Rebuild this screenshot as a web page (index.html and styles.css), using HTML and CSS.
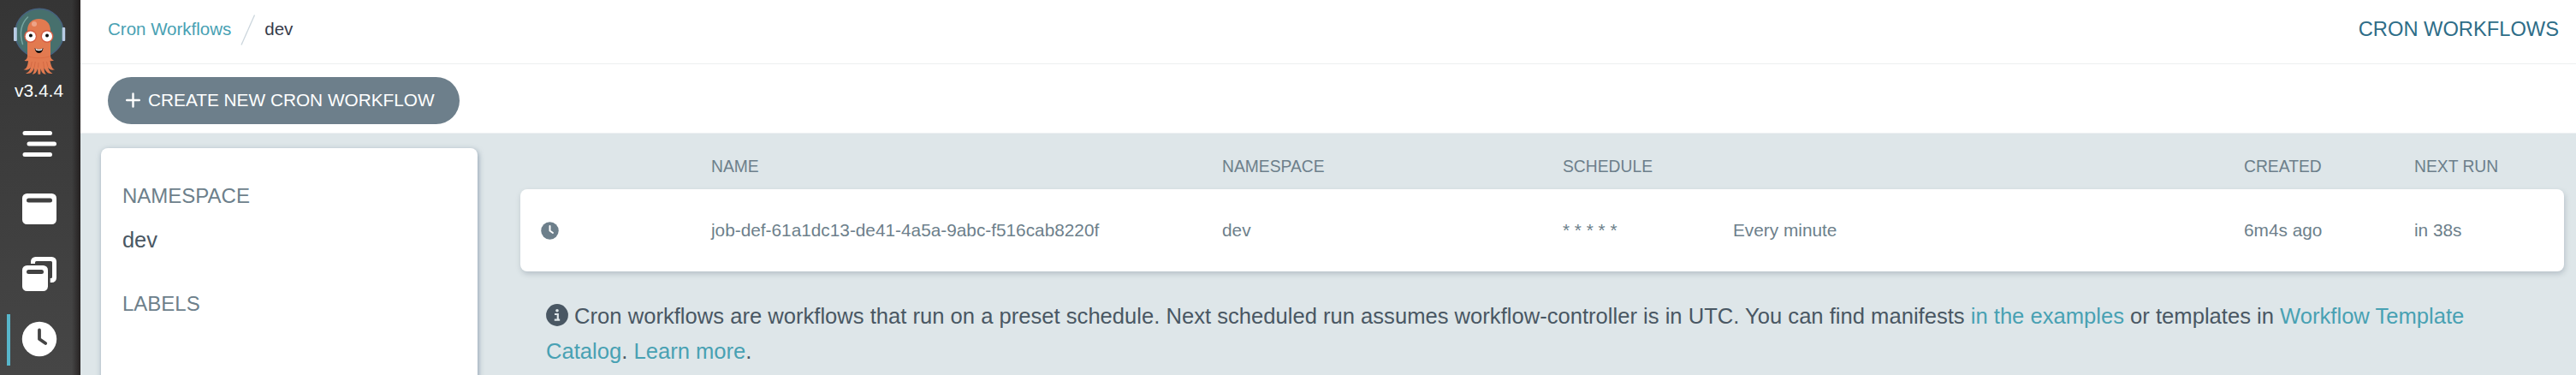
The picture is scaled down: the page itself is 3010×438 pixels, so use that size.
FILE: index.html
```html
<!DOCTYPE html>
<html lang="en">
<head>
<meta charset="utf-8">
<title>Cron Workflows</title>
<link rel="stylesheet" href="styles.css">
</head>
<body>
<div class="app">
  <nav class="sidebar">
    <svg class="logo" viewBox="0 0 62 80" width="62" height="80">
      <circle cx="31" cy="30.500" r="28.300" fill="#47706d" stroke="#476280" stroke-width="1.400"/>
      <path d="M17.500 12C9.500 20 7.500 31 11.500 43.500" fill="none" stroke="#77a5a0" stroke-width="1.500" stroke-linecap="round"/>
      <rect x="1" y="24" width="3.800" height="16" rx="1" fill="#b8cbe4"/>
      <rect x="57.700" y="24" width="3.500" height="16" rx="1" fill="#b8cbe4"/>
      <path d="M17 28C17 19 22.500 14 30.500 14S44 19 44 28V57C44 60 46 62 48 62.500C46 63.500 44.500 63.400 43.500 63C44.500 68.500 46 72.500 49 73.300C45.500 74.500 43 73.500 41 70.500C42 74.500 44 77 46.500 77.700C42 79 38.500 76 36.500 71C36.500 75 37.500 77.500 39 78.500C35 79 33.300 76 32.500 72L32.200 78.800H29.500L29 72C28 76 26 79 22.500 78.500C24.500 77 25 74.500 25 71C23.500 76 20 79 15 77.700C18 76.800 20 74.500 21 70.500C19 73.500 16 74.500 12.500 73.300C16 72.500 17.500 68.500 18 63C16.500 63.600 15 63.500 13.500 62.500C16 61.500 17 60 17 57Z" fill="#e27a50"/>
      <path d="M17 57.500C25 60.500 36 60.500 44 57.500" fill="none" stroke="#d9653f" stroke-width="1" opacity=".6"/>
      <path d="M25 71L26.300 64M36.500 71L35.500 64M21 70L22.300 64M41 70L39.500 64M29.500 71L30 65" stroke="#c95e3b" stroke-width=".6"/>
      <circle cx="25" cy="20" r="3" fill="#eda387"/>
      <circle cx="20.700" cy="34.500" r="7.400" fill="#d65d42"/>
      <circle cx="40" cy="34.500" r="7.400" fill="#d65d42"/>
      <circle cx="20.700" cy="34.500" r="6" fill="#fff"/>
      <circle cx="40" cy="34.500" r="6" fill="#fff"/>
      <circle cx="20.900" cy="33.500" r="2" fill="#111"/>
      <circle cx="40" cy="33.500" r="2" fill="#111"/>
      <path d="M25.500 48C29 50.300 32 50.300 35.500 48C35 52 33 54 30.500 54S26 52 25.500 48Z" fill="#141010"/>
      <path d="M26.300 48.400C29 50.300 32 50.300 34.700 48.400L34 50.400C32 51.400 29 51.400 27 50.400Z" fill="#fff"/>
    </svg>
    <div class="version">v3.4.4</div>
    <a class="nav-item"><svg width="42" height="42" viewBox="0 0 42 42"><path d="M4 8.500H33.500M9 21H38.500M4 33.500H33.500" stroke="#fff" stroke-width="5" stroke-linecap="round"/></svg></a>
    <a class="nav-item"><svg width="42" height="42" viewBox="0 0 42 42"><rect x="1" y="3" width="40" height="36" rx="5.500" fill="#fff"/><path d="M8.500 11H33.500" stroke="#404040" stroke-width="5" stroke-linecap="round"/></svg></a>
    <a class="nav-item"><svg width="42" height="42" viewBox="0 0 42 42"><path d="M11 9V6.500A5.500 5.500 0 0 1 16.500 1H35.500A5.500 5.500 0 0 1 41 6.500V25.500A5.500 5.500 0 0 1 35.500 31H33.700V26H34.500Q36 26 36 24.500V7.500Q36 6 34.500 6H17.500Q16 6 16 7.500V9Z" fill="#fff"/><rect x="1" y="11" width="30" height="30" rx="5.500" fill="#fff"/><path d="M8.500 18.500H23.500" stroke="#424242" stroke-width="5" stroke-linecap="round"/></svg></a>
    <a class="nav-item active"><svg width="42" height="42" viewBox="0 0 42 42"><circle cx="21" cy="21" r="20.200" fill="#fff"/><path d="M21 10.500V21L28.200 26" fill="none" stroke="#444" stroke-width="3.800" stroke-linecap="round" stroke-linejoin="round"/></svg></a>
  </nav>
  <div class="page">
    <header class="topbar">
      <div class="crumbs">
        <a class="link">Cron Workflows</a>
        <svg class="slash" width="18" height="36" viewBox="0 0 18 36"><path d="M1 35.500L16.500.500" stroke="#ccd6dd" stroke-width="1.300"/></svg>
        <span class="current">dev</span>
      </div>
      <div class="title">CRON WORKFLOWS</div>
    </header>
    <div class="toolbar">
      <button class="create"><svg class="plus" width="17" height="18" viewBox="0 0 17 18"><path d="M8.500 1.500V16.500M1.200 9H15.800" stroke="#fff" stroke-width="2.400" stroke-linecap="round"/></svg><span>CREATE NEW CRON WORKFLOW</span></button>
    </div>
    <div class="content">
      <aside class="filters">
        <p class="label">NAMESPACE</p>
        <p class="value">dev</p>
        <p class="label">LABELS</p>
      </aside>
      <main class="main">
        <div class="grid head">
          <div></div><div class="c3">NAME</div><div class="c2">NAMESPACE</div><div class="c4">SCHEDULE</div><div>CREATED</div><div>NEXT RUN</div>
        </div>
        <div class="grid row">
          <div class="status"><svg width="21" height="21" viewBox="0 0 42 42"><circle cx="21" cy="21" r="20.500" fill="#6d7f8b"/><path d="M21 10V21L28 26" fill="none" stroke="#fff" stroke-width="4" stroke-linecap="round" stroke-linejoin="round"/></svg></div>
          <div class="c3 job">job-def-61a1dc13-de41-4a5a-9abc-f516cab8220f</div><div class="c2">dev</div><div class="stars">* * * * *</div><div class="c3">Every minute</div><div>6m4s ago</div><div>in 38s</div>
        </div>
        <p class="info"><svg class="info-icon" width="26" height="26" viewBox="0 0 26 26"><circle cx="13" cy="13" r="12.900" fill="#495763"/><circle cx="13" cy="7.800" r="1.800" fill="#dee6e9"/><path d="M10 12H13.800V18M9.800 18.600H16.200" fill="none" stroke="#dee6e9" stroke-width="2.200"/></svg> Cron workflows are workflows that run on a preset schedule. Next scheduled run assumes workflow-controller is in UTC. You can find manifests <a class="link">in the examples</a> or templates in <a class="link">Workflow Template<br>Catalog</a>. <a class="link">Learn more</a>.</p>
      </main>
    </div>
  </div>
</div>
</body>
</html>
```
FILE: styles.css
```css
* { box-sizing: border-box; }
body { margin: 0; font-family: "Liberation Sans", Arial, sans-serif; color: #495763; }
p { margin: 0; }
.app { display: flex; width: 3010px; height: 438px; overflow: hidden; }
.sidebar {
  width: 94px; flex: none; padding: 8px 3px 0 0;
  display: flex; flex-direction: column; align-items: center;
  background: linear-gradient(to right, transparent 84px, rgba(25, 20, 20, .7) 94px), linear-gradient(#353535, #464646);
}
.logo { display: block; flex: none; }
.version { flex: none; font-size: 21px; line-height: 24px; margin: 6px 0 20px; color: #f8fbfb; }
.nav-item { width: 91px; height: 60px; flex: none; margin-bottom: 16px; display: flex; align-items: center; justify-content: center; }
.nav-item svg { display: block; }
.active { margin: 1px 0 0 8px; border-left: 4px solid #57b6cb; width: 83px; padding: 0 12px 2px 0; }
.page { flex: 1; min-width: 0; display: flex; flex-direction: column; background: #dee6e9; }
.topbar { height: 75px; flex: none; padding: 0 20px 5px 32px; display: flex; align-items: center; justify-content: space-between; background: #fff; border-bottom: 1px solid #eceff0; }
.crumbs { display: flex; align-items: center; font-size: 20.5px; }
.crumbs .link, .crumbs .current { padding-bottom: 1px; }
.link { color: #48a1b3; }
.slash { margin: 0 10px 0 11px; }
.current { color: #363c4a; }
.title { font-size: 23.7px; color: #2e6d88; }
.toolbar { height: 81px; flex: none; padding: 15px 32px 0; background: #fff; border-bottom: 1px solid #edf1f3; }
.create { width: 411px; height: 55px; padding: 0 0 2px 21px; border: 0; border-radius: 28px; background: #6d7f8b; color: #fff; display: flex; align-items: center; font: 20.8px "Liberation Sans", Arial, sans-serif; white-space: nowrap; }
.plus { margin-right: 9px; }
.content { flex: 1; display: flex; padding: 17px 14px 0 24px; }
.filters { width: 440px; height: 300px; flex: none; padding: 42px 25px; margin-right: 50px; background: #fff; border-radius: 8px; box-shadow: 1px 2px 6px rgba(100, 122, 143, .65); }
.label { font-size: 24px; line-height: 28px; color: #6d7f8b; }
.value { font-size: 25.4px; line-height: 30px; margin: 22px 0 46px; }
.main { flex: 1; min-width: 0; }
.grid { display: grid; grid-template-columns: repeat(12, 1fr); align-items: center; color: #6d7f8b; white-space: nowrap; }
.grid > div { padding-left: 24px; }
.grid > .c2 { grid-column: span 2; }
.grid > .c3 { grid-column: span 3; }
.grid > .c4 { grid-column: span 4; }
.head { height: 48px; padding-bottom: 5px; font-size: 19.3px; }
.row { height: 96px; background: #fff; border-radius: 8px; box-shadow: 1px 3px 6px rgba(100, 115, 130, .32); font-size: 20.8px; }
.status svg { display: block; }
.info { padding: 32px 0 0 30px; font-size: 25.6px; line-height: 41px; white-space: nowrap; }
.info-icon { vertical-align: -3px; }
```
